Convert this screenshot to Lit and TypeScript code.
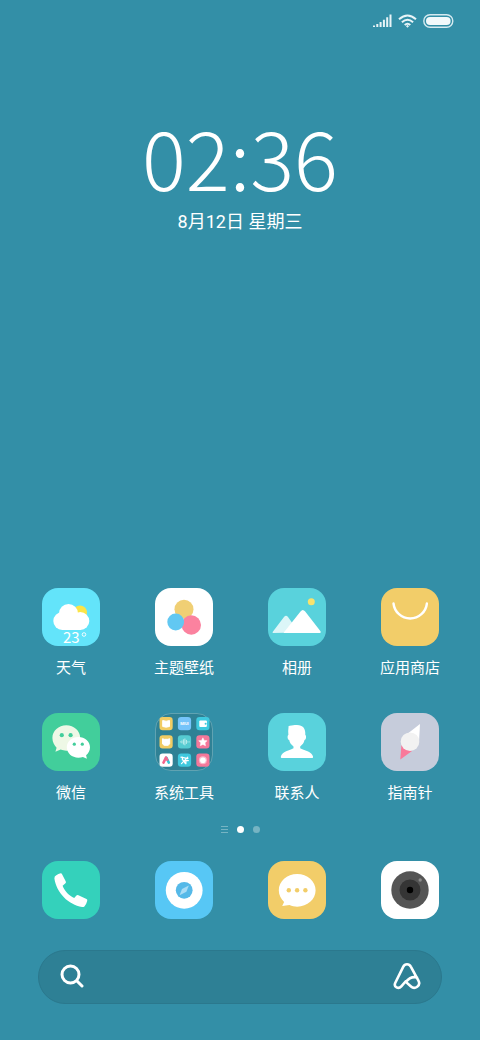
import { LitElement, html, svg, css, TemplateResult, SVGTemplateResult } from "lit";
import { customElement, property } from "lit/decorators.js";

interface App {
  name: string;
  color: string;
  art: SVGTemplateResult;
  folder?: boolean;
}

const weather = svg`
  <circle cx="38" cy="24.5" r="7" fill="#fbe447"/>
  <g fill="#fff"><circle cx="26.5" cy="25.5" r="9.5"/><circle cx="20.3" cy="33" r="9"/>
  <circle cx="38.3" cy="33" r="9"/><rect x="20" y="26" width="19" height="16"/></g>
  <text class="degrees" x="21" y="55">23</text>
  <circle cx="42" cy="46.5" r="1.800" fill="none" stroke="#fff" stroke-width=".9"/>`;

const themes = svg`
  <circle cx="29" cy="21.3" r="9.5" fill="#f0cf74"/>
  <circle cx="36.3" cy="37" r="9.7" fill="#fb829f"/>
  <circle cx="20.7" cy="34" r="8.4" fill="#62c8f2"/>`;

const album = svg`
  <circle cx="43.3" cy="13.7" r="3.5" fill="#f8e26c"/>
  <path d="M5 43.5 16 29q2-2.300 4 0L31 44.500 5 45q-1-.4 0-1.500Z" fill="#dcf6f8"/>
  <path d="M17 43 32.500 23.500q2.300-3 4.700 0L52.500 43.200q1 1.800-.8 1.800H15.500Z" fill="#fff"/>`;

const store = svg`
  <path d="M12.500 15.500a16.800 16.800 0 0 0 33.400 0" fill="none" stroke="#fff" stroke-width="2.400" stroke-linecap="round"/>`;

const wechat = svg`
  <path d="M24.300 12.300c-7.700 0-13.900 5.600-13.900 12.700 0 4 2 7.500 4.200 9.700l-1.200 4.100 5.300-2.200c2 .8 3.700 1.100 5.600 1.100 7.700 0 13.900-5.600 13.900-12.700s-6.200-12.700-13.900-12.700Z" fill="#eef8e6"/>
  <path d="M36.400 24c-6.500 0-11.600 4.500-11.600 10.300s5.100 10.400 11.600 10.400c1.700 0 3.100-.3 4.500-.7l4 1.700-.8-3.400c2.300-1.900 3.900-4.500 3.900-8 0-5.800-5.100-10.300-11.600-10.300Z" fill="#fff"/>
  <g fill="#42ce9b"><circle cx="19.800" cy="22.200" r="2.100"/><circle cx="28.600" cy="22.200" r="2.100"/>
  <circle cx="32.300" cy="31.200" r="1.600"/><circle cx="40.300" cy="31.200" r="1.600"/></g>`;

const tile = (col: number, row: number, color: string, art: SVGTemplateResult) => svg`
  <g transform="translate(${4.5 + col * 18.4} ${4 + row * 18.3})">
    <rect width="13.200" height="13.200" rx="3.200" fill=${color}/>${art}
  </g>`;

const tools = svg`
  ${tile(0, 0, "#f1cc63", svg`<path d="M3.200 3.500q3.400 1.500 6.800 0v6q-3.400 1.300-6.800 0Z" fill="#fff" stroke="#fff" stroke-linejoin="round"/>`)}
  ${tile(1, 0, "#75c4fa", svg`<text class="badge" x="6.600" y="8.300">MIUI</text>`)}
  ${tile(2, 0, "#3fc9de", svg`<rect x="3" y="3.600" width="7.600" height="6.400" rx="1" fill="#fff"/><circle cx="9.300" cy="6.800" r="1" fill="#3fc9de"/>`)}
  ${tile(0, 1, "#f1cc63", svg`<path d="M3 3.400 4.800 4h3.600l1.800-.6v5.200L8.600 10h-4L3 8.600Z" fill="#fff" stroke="#fff" stroke-linejoin="round"/>`)}
  ${tile(1, 1, "#55cbd1", svg`<path d="M2 6.600h1M4 5.200v2.800M5.500 4v5.200M7 3.200v6.800M8.500 4.600v4M10 6v1.200M11 6.600h.8" stroke="#c8f0ef" stroke-width=".9"/>`)}
  ${tile(2, 1, "#f5789a", svg`<path d="m6.600 2.500 1.300 2.600 2.900.4-2.100 2 .5 2.900-2.600-1.300L4 10.400l.5-2.900-2.100-2 2.900-.4Z" fill="#fff" stroke="#fff" stroke-width=".5" stroke-linejoin="round"/>`)}
  ${tile(0, 2, "#fff", svg`<path d="m4 9 2.400-5" stroke="#f5658c" stroke-width="2.500" stroke-linecap="round"/><path d="m7 4.200 2.300 4.800" stroke="#35c8d8" stroke-width="2.500" stroke-linecap="round"/><path d="m6.600 4 1.200 2.200" stroke="#f5658c" stroke-width="2.300" stroke-linecap="round"/>`)}
  ${tile(1, 2, "#3fc9de", svg`<path d="m3 3.500 7 1.500M3.600 10l6.300-6.500M4.500 3.500v2.800l1.800.7.700 2.500M7.500 7h3M8 7v3.200" stroke="#fff" stroke-width="1.200" fill="none" stroke-linecap="round"/>`)}
  ${tile(2, 2, "#f5789a", svg`<g fill="#fff"><circle cx="6.600" cy="6.600" r="4" opacity=".5"/><circle cx="6.600" cy="6.600" r="2.800"/></g>`)}`;

const contacts = svg`
  <path d="M20.500 14.500q-.6-1.500 1.200-1.800C25 12.400 26.500 12 29 12.100c6 .2 8.700 3.400 8.300 9.900 1.300.5 1 4.600-.8 5.100-.5 2.700-2.100 4.900-4.300 6.300v1.900c3.500 2.200 12 3 12.900 8.500q.2 1.200-1 1.200H13.800q-1.200 0-1-1.200c.9-5.500 9.200-6.300 12.700-8.500v-1.900c-2.200-1.400-3.800-3.600-4.300-6.300-1.800-.5-2.100-4.600-.8-5.100q-.5-4 .1-7.500Z" fill="#fff"/>`;

const compass = svg`
  <path d="M39 11 21 25l10 8 7-4Z" fill="#fff"/>
  <path d="M19.300 46.500 20.400 32 31 38Z" fill="#f9799a"/>
  <circle cx="29" cy="28.700" r="9.300" fill="#f2f2f2"/>`;

const phone = svg`
  <path d="M14.300 14.200q2-1.700 4.400-2 1 0 1.500 1.200l3.600 7.200q.5 1.300-.6 2l-2.600 2.100c2 5.300 6.300 9.800 11.600 12.400l2-2.400q.9-1.100 2.200-.5l8.100 3.900q1.200.7.700 1.800-.7 3-2.800 5.500-1 .9-2.300.6C26.500 43.700 14.500 32 12.400 17.500q-.2-2.300 1.900-3.300Z" fill="#fff"/>`;

const browser = svg`
  <circle cx="29.200" cy="29.300" r="18.400" fill="#fff"/>
  <circle cx="29.200" cy="29.300" r="8.400" fill="#55b9e8"/>
  <path d="m33.800 24.500-2.400 6.300-6.800 3.500 2.400-6.300Z" fill="#a8dcf5"/>`;

const messages = svg`
  <path d="M29.200 13c-10.200 0-18.400 7.200-18.400 16.300 0 4.800 2.200 8.900 5.300 11.700L14.200 45l7.300-1c2.400 1.100 5 1.700 7.700 1.700 10.200 0 18.400-7.300 18.400-16.400S39.400 13 29.200 13Z" fill="#fff"/>
  <g fill="#f2cd69"><circle cx="20.800" cy="29.200" r="2.200"/><circle cx="29.100" cy="29.200" r="2.200"/><circle cx="37.400" cy="29.200" r="2.200"/></g>`;

const camera = svg`
  <circle cx="29" cy="29" r="18.700" fill="#555"/><circle cx="29" cy="29" r="10.500" fill="#353535"/>
  <circle cx="29" cy="29" r="3.200" fill="#000"/><circle cx="39.200" cy="19" r="1.700" fill="#8a8a8a"/>`;

const grid: App[] = [
  { name: "天气", color: "#63e4fa", art: weather },
  { name: "主题壁纸", color: "#ffffff", art: themes },
  { name: "相册", color: "#59d2dc", art: album },
  { name: "应用商店", color: "#f2cd69", art: store },
  { name: "微信", color: "#42ce9b", art: wechat },
  { name: "系统工具", color: "#2f8195", art: tools, folder: true },
  { name: "联系人", color: "#59d2dc", art: contacts },
  { name: "指南针", color: "#c6ccdb", art: compass },
];

const dock: App[] = [
  { name: "电话", color: "#34d1bb", art: phone },
  { name: "浏览器", color: "#57c7f5", art: browser },
  { name: "短信", color: "#f2cd69", art: messages },
  { name: "相机", color: "#ffffff", art: camera },
];

@customElement("app-icon")
export class AppIcon extends LitElement {
  @property({ attribute: false }) app!: App;
  @property({ type: Boolean }) labelled = false;

  static styles = css`
    :host { display: block; width: 58px; }
    .launch {
      display: flex; flex-direction: column; align-items: center; gap: 10px;
      width: 100%; padding: 0; border: 0; background: none; color: #fff;
      font: inherit; cursor: pointer;
    }
    .art { display: block; width: 58px; height: 58px; }
    .label { font-size: 15px; line-height: 22px; white-space: nowrap; }
    .degrees { font: 400 15px "Noto Sans CJK SC", sans-serif; fill: #fff; }
    .badge { font: 700 4px "Roboto", sans-serif; fill: #fff; text-anchor: middle; }
  `;

  render(): TemplateResult {
    const { name, color, art, folder } = this.app;
    return html`<button class="launch" aria-label=${name}>
      <svg class="art" viewBox="0 0 58 58" aria-hidden="true">
        ${folder
          ? svg`<rect x=".5" y=".5" width="57" height="57" rx="15.500" fill=${color} stroke="#60a3b2"/>`
          : svg`<rect width="58" height="58" rx="16" fill=${color}/>`}
        ${art}
      </svg>
      ${this.labelled ? html`<span class="label">${name}</span>` : ""}
    </button>`;
  }
}

@customElement("app-root")
export class AppRoot extends LitElement {
  static styles = css`
    :host {
      display: flex; flex-direction: column; box-sizing: border-box;
      min-height: 100vh; background: #338fa7; color: #fff;
      font-family: "Noto Sans CJK SC", sans-serif;
    }
    .status { display: flex; justify-content: flex-end; align-items: center; gap: 6px; padding: 14px 26px 0; height: 14px; }
    .status svg { display: block; }
    .clock { display: flex; flex-direction: column; align-items: center; padding-top: 83px; }
    .time { font: 300 82px/90px "Noto Sans CJK SC", sans-serif; }
    .date { font-family: "Roboto", "Noto Sans CJK SC", sans-serif; font-size: 18px; line-height: 26px; margin-top: 8px; }
    .apps { display: grid; grid-template-columns: repeat(4, 58px); justify-content: space-between; row-gap: 35px; margin-top: auto; padding: 0 41px 0 42px; }
    .pages { display: flex; justify-content: center; align-items: center; gap: 9px; height: 8px; margin-top: 22px; }
    .pages svg { display: block; }
    .dot { width: 7px; height: 7px; border-radius: 50%; background: #76b4c3; }
    .dot.current { background: #fff; }
    .dock { display: flex; justify-content: space-between; padding: 28px 41px 0 42px; }
    .search {
      display: flex; justify-content: space-between; align-items: center; box-sizing: border-box;
      height: 54px; margin: 31px 38px 36px; padding: 0 20px 2px 21px;
      border: 1px solid #2b788d; border-radius: 27px; background: #2e8095;
    }
    .tool { display: block; padding: 0; border: 0; background: none; cursor: pointer; }
    .tool svg { display: block; }
    .query { flex: 1; min-width: 0; border: 0; outline: 0; background: none; color: #fff; font: inherit; }
  `;

  render(): TemplateResult {
    return html`
      <header class="status">
        <svg width="19" height="14" viewBox="0 0 19 14" fill="#e8f4f7">
          <path d="M0 11.500h2V13H0zM3.300 10h2v3h-2zM6.600 8h2v5h-2zM9.900 5.800h2V13h-2zM13.200 3.300h2V13h-2zM16.500.500h2V13h-2z"/>
        </svg>
        <svg width="19" height="14" viewBox="0 0 19 14" fill="none" stroke="#e8f4f7" stroke-width="2">
          <path d="M1 5.300q8.500-7.600 17 0M3.900 8.300q5.600-5 11.200 0M6.700 11q2.800-2.500 5.600 0"/><circle cx="9.500" cy="12.300" r=".8" fill="#e8f4f7" stroke-width="1"/>
        </svg>
        <svg width="31" height="14" viewBox="0 0 31 14">
          <rect x=".8" y=".8" width="29" height="12.400" rx="6.200" fill="none" stroke="#d5eaf0" stroke-width="1.400"/>
          <rect x="3" y="3" width="24.600" height="8" rx="4" fill="#f2f9fb"/>
        </svg>
      </header>
      <section class="clock">
        <time class="time">02:36</time>
        <span class="date">8月12日 星期三</span>
      </section>
      <nav class="apps">${grid.map((app) => html`<app-icon .app=${app} labelled></app-icon>`)}</nav>
      <div class="pages">
        <svg width="7" height="7" viewBox="0 0 7 7" stroke="#76b4c3"><path d="M0 .5h7M0 3.500h7M0 6.500h7"/></svg>
        <span class="dot current"></span>
        <span class="dot"></span>
      </div>
      <nav class="dock">${dock.map((app) => html`<app-icon .app=${app}></app-icon>`)}</nav>
      <form class="search" role="search">
        <button class="tool" type="button" aria-label="搜索">
          <svg width="24" height="24" viewBox="0 0 24 24" fill="none" stroke="#fff" stroke-width="3" stroke-linecap="round">
            <circle cx="10.500" cy="10.500" r="8.500"/><path d="m17 17 5 5"/>
          </svg>
        </button>
        <input class="query" type="text" aria-label="搜索内容" />
        <button class="tool" type="button" aria-label="小爱同学">
          <svg width="28" height="28" viewBox="0 0 28 28" fill="none" stroke="#fff" stroke-width="2.600" stroke-linejoin="round" stroke-linecap="round">
            <path d="M12.500 19.500 8.300 24.300C5.500 27.500.5 25 2.200 21L10.300 4.600c1.500-3.200 5.900-3.200 7.500 0l7.500 13.700c3.200 5.600-3.700 9.400-7.300 6.200l-5.200-4.600c3.200-3.700 6.500-5.900 11.200-4.300"/>
          </svg>
        </button>
      </form>
    `;
  }
}
